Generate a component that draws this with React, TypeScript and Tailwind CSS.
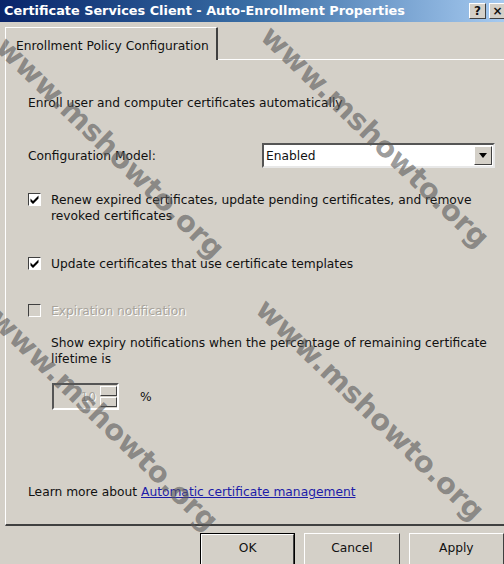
import React from 'react';

function Check({ checked, disabled }: { checked?: boolean; disabled?: boolean }) {
  return (
    <div
      className={`w-[13px] h-[13px] shrink-0 mt-[1px] border border-t-[#404040] border-l-[#404040] border-r-white border-b-white ${
        disabled ? 'bg-[#d4d0c8]' : 'bg-white'
      }`}
    >
      {checked && (
        <svg viewBox="0 0 11 11" className="w-[11px] h-[11px]">
          <path d="M1.5 4.5 L4 7 L9.5 1.5 L9.5 4.5 L4 10 L1.5 7.5 Z" fill="#000" />
        </svg>
      )}
    </div>
  );
}

function Watermark({ x, y }: { x: number; y: number }) {
  return (
    <div
      className="absolute pointer-events-none whitespace-nowrap font-bold text-[29px] leading-none text-[rgba(90,90,90,0.62)] -translate-x-1/2 -translate-y-1/2 rotate-[44deg]"
      style={{ left: x, top: y }}
    >
      www.mshowto.org
    </div>
  );
}

export default function App() {
  return (
    <div
      className="relative w-[504px] h-[564px] overflow-hidden bg-[#d4d0c8] text-[#111] text-[12.25px] leading-[16px]"
      style={{ fontFamily: '"DejaVu Sans", Verdana, sans-serif' }}
    >
      {/* Title bar */}
      <div className="h-[22px] flex items-center bg-gradient-to-r from-[#0a246a] via-[#3a6ea5] to-[#a6caf0] pl-[4px]">
        <span className="w-[465px] shrink-0 text-white font-bold text-[12.85px]">
          Certificate Services Client - Auto-Enrollment Properties
        </span>
        <div className="flex gap-[3px]">
          <div className="w-[17px] h-[16px] shrink-0 bg-[#d4d0c8] border border-t-white border-l-white border-r-[#404040] border-b-[#404040] flex items-center justify-center text-[12px] font-bold leading-none">
            ?
          </div>
          <div className="w-[17px] h-[16px] shrink-0 bg-[#d4d0c8] border border-t-white border-l-white border-r-[#404040] border-b-[#404040] flex items-center justify-center text-[12px] font-bold leading-none">
            ×
          </div>
        </div>
      </div>

      {/* Tabs */}
      <div className="flex items-end mt-[5px] pl-[5px] h-[33px]">
        <div className="h-full w-[213px] border-l border-t border-white border-r-2 border-r-[#404040] rounded-tr-[1px] pl-[10px] pt-[10px]">
          Enrollment Policy Configuration
        </div>
        <div className="flex-1 border-b border-white" />
      </div>

      {/* Panel */}
      <div className="ml-[5px] h-[466px] border-l border-white border-b-2 border-b-[#404040] pl-[22px]">
        <div className="pt-[35px]">Enroll user and computer certificates automatically</div>

        <div className="mt-[32px] flex items-center h-[25px]">
          <div className="w-[234px]">Configuration Model:</div>
          <div className="w-[233px] h-[25px] bg-white border-2 border-t-[#555] border-l-[#555] border-r-[#e8e8e8] border-b-[#e8e8e8] flex items-center">
            <span className="flex-1 pl-[2px]">Enabled</span>
            <div className="w-[18px] h-[19px] mr-[1px] bg-[#d4d0c8] border border-t-white border-l-white border-r-[#404040] border-b-[#404040] flex items-center justify-center">
              <svg viewBox="0 0 8 5" className="w-[8px] h-[5px]">
                <path d="M0 0 H8 L4 5 Z" fill="#000" />
              </svg>
            </div>
          </div>
        </div>

        <div className="mt-[24px] flex gap-[10px]">
          <Check checked />
          <div>
            Renew expired certificates, update pending certificates, and remove
            <br />
            revoked certificates
          </div>
        </div>

        <div className="mt-[32px] flex gap-[10px]">
          <Check checked />
          <div>Update certificates that use certificate templates</div>
        </div>

        <div className="mt-[31px] flex gap-[10px]">
          <Check disabled />
          <div className="text-[#a8a49c] [text-shadow:1px_1px_0_#fff]">Expiration notification</div>
        </div>

        <div className="mt-[16px] pl-[23px]">
          Show expiry notifications when the percentage of remaining certificate
          <br />
          lifetime is
        </div>

        <div className="mt-[16px] pl-[24px] flex items-center">
          <div className="w-[67px] h-[27px] border-2 border-t-[#555] border-l-[#555] border-r-white border-b-white flex items-center">
            <span className="flex-1 text-right pr-[4px] text-[#a8a49c] [text-shadow:1px_1px_0_#fff]">10</span>
            <div className="w-[17px] h-full flex flex-col gap-[1px] py-[1px]">
              <div className="flex-1 bg-[#d4d0c8] border border-t-white border-l-white border-r-[#404040] border-b-[#404040]" />
              <div className="flex-1 bg-[#d4d0c8] border border-t-white border-l-white border-r-[#404040] border-b-[#404040]" />
            </div>
          </div>
          <span className="ml-[21px]">%</span>
        </div>

        <div className="mt-[74px]">
          Learn more about <span className="text-[#1c1ca8] underline">Automatic certificate management</span>
        </div>
      </div>

      {/* Buttons */}
      <div className="mt-[7px] flex pl-[200px] gap-[9px]">
        <div className="w-[96px] h-[34px] border border-black flex">
          <div className="flex-1 border border-t-white border-l-white border-r-[#404040] border-b-[#404040] flex items-center justify-center pb-[4px]">
            OK
          </div>
        </div>
        <div className="w-[96px] h-[34px] border border-t-white border-l-white border-r-[#404040] border-b-[#404040] flex items-center justify-center pb-[4px]">
          Cancel
        </div>
        <div className="w-[96px] h-[34px] border border-t-white border-l-white border-r-[#404040] border-b-[#404040] flex items-center justify-center pb-[4px]">
          Apply
        </div>
      </div>

      <Watermark x={110} y={148} />
      <Watermark x={375} y={137} />
      <Watermark x={104} y={420} />
      <Watermark x={370} y={410} />
    </div>
  );
}
